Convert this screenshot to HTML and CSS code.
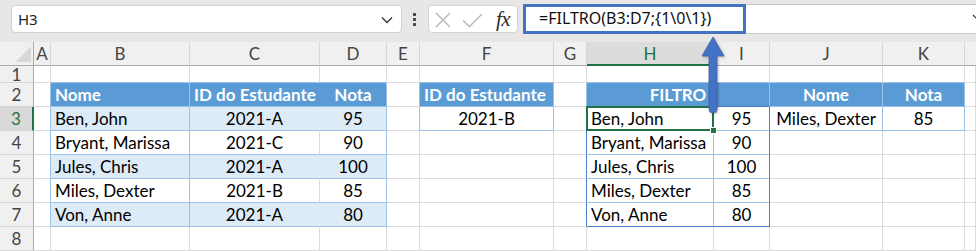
FILE: index.html
```html
<!DOCTYPE html>
<html lang="pt">
<head>
<meta charset="utf-8">
<title>FILTRO</title>
<link rel="stylesheet" href="styles.css">
</head>
<body>
<div class="topbar">
  <div class="namebox">
    <span class="nb-text">H3</span>
    <svg class="chev" width="12" height="8" viewBox="0 0 12 8"><path d="M1 1.5 L6 6.5 L11 1.5" fill="none" stroke="#333" stroke-width="1.3"/></svg>
  </div>
  <div class="dots"><i></i><i></i><i></i></div>
  <div class="fxbox">
    <svg width="88" height="26" viewBox="0 0 88 26">
      <path d="M7 7 L21 21 M21 7 L7 21" stroke="#b5b5b5" stroke-width="1.4" fill="none"/>
      <path d="M34 14.5 L40.5 20.5 L53 8" stroke="#b5b5b5" stroke-width="1.4" fill="none"/>
    </svg>
    <span class="fx">fx</span>
  </div>
  <div class="formula">
    <div class="hl">=FILTRO(B3:D7;{1\0\1})</div>
    <div class="rest"><svg class="rchev" width="8" height="6" viewBox="0 0 8 6"><path d="M1 1 L4 4 L7 1" fill="none" stroke="#333" stroke-width="1.2"/></svg></div>
  </div>
</div>

<div class="sheet">
  <div class="corner"></div>
  <div class="ch">A</div><div class="ch">B</div><div class="ch">C</div><div class="ch">D</div><div class="ch">E</div><div class="ch">F</div><div class="ch">G</div><div class="ch sel">H</div><div class="ch">I</div><div class="ch">J</div><div class="ch">K</div><div class="ch last"></div>

  <div class="rh">1</div>
  <div class="c"></div><div class="c blb"></div><div class="c blb"></div><div class="c blb"></div><div class="c"></div><div class="c blb"></div><div class="c"></div><div class="c blb"></div><div class="c blb"></div><div class="c blb"></div><div class="c blb"></div><div class="c"></div>

  <div class="rh">2</div>
  <div class="c rlb"></div>
  <div class="c h rlb blb">Nome</div>
  <div class="c h rhd blb">ID do Estudante</div>
  <div class="c h ctr rlb blb">Nota</div>
  <div class="c rlb"></div>
  <div class="c h rlb blb">ID do Estudante</div>
  <div class="c rlb"></div>
  <div class="c h ctr span2 rlb bdb">FILTRO</div>
  <div class="c h ctr rlb blb">Nome</div>
  <div class="c h ctr rlb blb">Nota</div>
  <div class="c"></div>

  <div class="rh sel">3</div>
  <div class="c rlb"></div>
  <div class="c band rlb blb">Ben, John</div>
  <div class="c band ctr rband blb">2021-A</div>
  <div class="c band ctr rlb blb">95</div>
  <div class="c rlb"></div>
  <div class="c ctr rlb blb">2021-B</div>
  <div class="c rdb"></div>
  <div class="c active rlb blb">Ben, John</div>
  <div class="c ctr rdb blb">95</div>
  <div class="c ctr rlb blb">Miles, Dexter</div>
  <div class="c ctr rlb blb">85</div>
  <div class="c"></div>

  <div class="rh">4</div>
  <div class="c rlb"></div>
  <div class="c rlb blb">Bryant, Marissa</div>
  <div class="c ctr blb">2021-C</div>
  <div class="c ctr rlb blb">90</div>
  <div class="c"></div>
  <div class="c"></div>
  <div class="c rdb"></div>
  <div class="c rlb blb">Bryant, Marissa</div>
  <div class="c ctr rdb blb">90</div>
  <div class="c"></div><div class="c"></div><div class="c"></div>

  <div class="rh">5</div>
  <div class="c rlb"></div>
  <div class="c band rlb blb">Jules, Chris</div>
  <div class="c band ctr rband blb">2021-A</div>
  <div class="c band ctr rlb blb">100</div>
  <div class="c"></div>
  <div class="c"></div>
  <div class="c rdb"></div>
  <div class="c rlb blb">Jules, Chris</div>
  <div class="c ctr rdb blb">100</div>
  <div class="c"></div><div class="c"></div><div class="c"></div>

  <div class="rh">6</div>
  <div class="c rlb"></div>
  <div class="c rlb blb">Miles, Dexter</div>
  <div class="c ctr blb">2021-B</div>
  <div class="c ctr rlb blb">85</div>
  <div class="c"></div>
  <div class="c"></div>
  <div class="c rdb"></div>
  <div class="c rlb blb">Miles, Dexter</div>
  <div class="c ctr rdb blb">85</div>
  <div class="c"></div><div class="c"></div><div class="c"></div>

  <div class="rh">7</div>
  <div class="c rlb"></div>
  <div class="c band rlb blb">Von, Anne</div>
  <div class="c band ctr rband blb">2021-A</div>
  <div class="c band ctr rlb blb">80</div>
  <div class="c"></div>
  <div class="c"></div>
  <div class="c rdb"></div>
  <div class="c rlb bdb">Von, Anne</div>
  <div class="c ctr rdb bdb">80</div>
  <div class="c"></div><div class="c"></div><div class="c"></div>

  <div class="rh">8</div>
  <div class="c"></div><div class="c"></div><div class="c"></div><div class="c"></div><div class="c"></div><div class="c"></div><div class="c"></div><div class="c"></div><div class="c"></div><div class="c"></div><div class="c"></div><div class="c"></div>
</div>

<svg class="arrow" width="30" height="84" viewBox="0 0 30 84">
  <path d="M13 3 L24 22 L17 22 L17 75 Q17 79 13 79 Q9 79 9 75 L9 22 L2 22 Z" fill="#4472c4" stroke="#3a63ad" stroke-width="0.8" stroke-linejoin="round"/>
</svg>
</body>
</html>
```

FILE: styles.css
```css
html, body {
  margin: 0;
  padding: 0;
}
body {
  position: relative;
  width: 976px;
  height: 251px;
  overflow: hidden;
  background: #ffffff;
  font-family: Lato, "Liberation Sans", sans-serif;
}

/* ---------- formula bar ---------- */
.topbar {
  height: 42px;
  box-sizing: border-box;
  background: #e9e6e6;
  display: flex;
  align-items: flex-start;
  padding: 5px 0 0 11px;
}
.namebox {
  width: 391px;
  height: 28px;
  box-sizing: border-box;
  background: #fff;
  border: 1px solid #d2d0d0;
  border-radius: 4px;
  display: flex;
  align-items: center;
  justify-content: space-between;
  padding: 0 8px 0 6px;
  font-family: "Noto Sans", "Open Sans", sans-serif;
  font-size: 15px;
  color: #222;
}
.chev { margin-top: 1px; }
.dots {
  margin: 8px 0 0 11px;
  display: flex;
  flex-direction: column;
  gap: 2px;
}
.dots i {
  display: block;
  width: 3px;
  height: 3px;
  background: #4a4a4a;
  border-radius: 0.5px;
}
.fxbox {
  margin-left: 12px;
  width: 90px;
  height: 28px;
  box-sizing: border-box;
  background: #fff;
  border: 1px solid #d6d4d4;
  border-radius: 4px;
  display: flex;
  align-items: center;
  position: relative;
}
.fxbox svg { display: block; }
.fx {
  position: absolute;
  left: 67px;
  top: 1px;
  font-family: "Liberation Serif", "DejaVu Serif", serif;
  font-style: italic;
  font-size: 21px;
  line-height: 24px;
  color: #2b2b2b;
  letter-spacing: -0.5px;
}
.formula {
  margin: -1px 0 0 5px;
  flex: 1;
  display: flex;
  height: 30px;
}
.hl {
  width: 223px;
  height: 30px;
  box-sizing: border-box;
  border: 3px solid #4472c4;
  background: #fff;
  padding-left: 13px;
  font-family: "Noto Sans", "Open Sans", sans-serif;
  font-size: 16px;
  line-height: 23px;
  color: #111;
  white-space: nowrap;
}
.rest {
  flex: 1;
  height: 30px;
  box-sizing: border-box;
  background: #fff;
  border-top: 1px solid #c9c7c7;
  border-bottom: 1px solid #c9c7c7;
  display: flex;
  justify-content: flex-end;
  align-items: flex-start;
}
.rchev { margin: 9px -4px 0 0; }

/* ---------- sheet ---------- */
.sheet {
  display: grid;
  grid-template-columns: 34px 17px 139px 130px 67px 33px 134px 33px 127px 56px 113px 82px 1fr;
  grid-template-rows: 24px 17px repeat(7, 24px);
}
.corner {
  background: #f0f0f0 linear-gradient(to bottom right, transparent 50%, #d8d8d8 50%) no-repeat;
  background-size: 16px 15px;
  background-position: right 2px bottom 3px;
  border-right: 1px solid #ababab;
  border-bottom: 1px solid #ababab;
}
.ch {
  background: #f0f0f0;
  border-right: 1px solid #d6d6d6;
  border-bottom: 1px solid #ababab;
  display: flex;
  align-items: center;
  justify-content: center;
  font-size: 17px;
  color: #444;
}
.ch.sel {
  background: #dcdcdc;
  color: #217346;
  border-bottom: 2px solid #217346;
}
.ch.last { border-right: none; }
.rh {
  background: #f0f0f0;
  border-right: 1px solid #ababab;
  border-bottom: 1px solid #d6d6d6;
  display: flex;
  align-items: center;
  justify-content: center;
  font-size: 17px;
  color: #444;
}
.rh.sel {
  background: #d9d9d9;
  color: #217346;
  border-right: 2px solid #217346;
}

.c {
  border-right: 1px solid #dadada;
  border-bottom: 1px solid #dadada;
  display: flex;
  align-items: flex-end;
  padding: 0 3px 1px 4px;
  font-size: 17px;
  line-height: 20px;
  color: #000;
  white-space: nowrap;
  min-width: 0;
}
.ctr { justify-content: center; padding-left: 0; padding-right: 0; }
.h {
  background: #5b9bd5;
  color: #fff;
  font-weight: 700;
}
.band { background: #ddebf7; }
.span2 { grid-column: span 2; }

.rlb { border-right-color: #9bc2e6; }
.blb { border-bottom-color: #9bc2e6; }
.rdb { border-right-color: #4a7cc9; }
.bdb { border-bottom-color: #4a7cc9; }
.rhd { border-right-color: #5b9bd5; }
.rband { border-right-color: #ddebf7; }

.active { position: relative; }
.active::after {
  content: "";
  position: absolute;
  left: -1px;
  top: -1px;
  right: -1px;
  bottom: -1px;
  border: 2px solid #217346;
}
.active::before {
  content: "";
  position: absolute;
  right: -4px;
  bottom: -4px;
  width: 5px;
  height: 5px;
  background: #217346;
  border: 1px solid #fff;
  z-index: 2;
}

/* annotation arrow */
.arrow {
  position: absolute;
  left: 700px;
  top: 34px;
  filter: drop-shadow(1px 1px 1px rgba(0,0,0,0.25));
}
```
